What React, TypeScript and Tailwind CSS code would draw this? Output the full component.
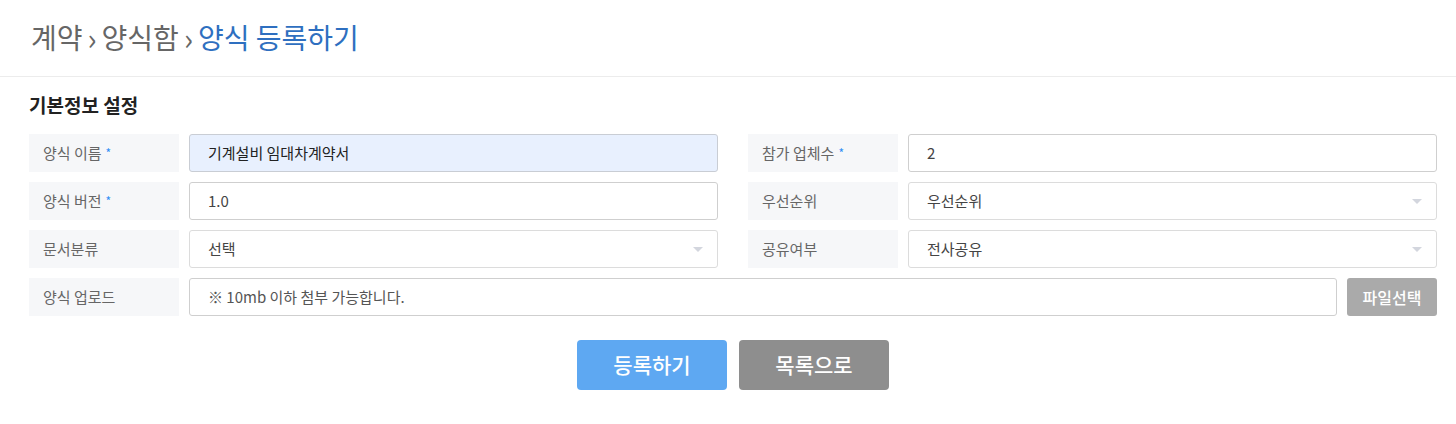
import React from "react";

const font = { fontFamily: '"Noto Sans CJK KR", "Noto Sans", sans-serif' };

function Label({ text, required }: { text: string; required?: boolean }) {
  return (
    <div className="w-[150px] h-[38px] shrink-0 bg-[#f6f7f9] flex items-center pl-[14px] text-[15px] text-[#666]">
      {text}
      {required && <span className="ml-[4px] text-[#2f8ef5] text-[12px] leading-none">*</span>}
    </div>
  );
}

function Field({ value, filled, select }: { value: string; filled?: boolean; select?: boolean }) {
  return (
    <div
      className={`flex-1 h-[38px] rounded-[3px] border flex items-center pl-[18px] pr-[14px] text-[15px] ${
        filled ? "bg-[#e8f0fe] border-[#c9cdd4] text-[#222]" : "bg-white"
      } ${select ? "border-[#dcdcdc] text-[#444]" : filled ? "" : "border-[#cfcfcf] text-[#444]"}`}
    >
      <span className="flex-1">{value}</span>
      {select && (
        <span className="w-0 h-0 border-l-[5px] border-r-[5px] border-t-[5px] border-l-transparent border-r-transparent border-t-[#d3d6de]" />
      )}
    </div>
  );
}

function Row({ label, required, value, filled, select }: { label: string; required?: boolean; value: string; filled?: boolean; select?: boolean }) {
  return (
    <div className="flex flex-1 gap-[10px]">
      <Label text={label} required={required} />
      <Field value={value} filled={filled} select={select} />
    </div>
  );
}

export default function App() {
  return (
    <div className="w-[1456px] h-[424px] bg-white" style={font}>
      <div className="h-[77px] border-b border-[#ececec] pl-[31px] flex items-center text-[28px] text-[#666] pb-[2px]">
        <span>계약</span>
        <span className="mx-[5px] text-[30px]">›</span>
        <span>양식함</span>
        <span className="mx-[5px] text-[30px]">›</span>
        <span className="text-[#2e6fc0]">양식 등록하기</span>
      </div>
      <div className="pl-[29px] pr-[19px] pt-[15px]">
        <h2 className="text-[19px] font-bold text-[#222] h-[26px] leading-[26px] mb-[16px]">기본정보 설정</h2>
        <div className="flex flex-col gap-[10px]">
          <div className="flex gap-[30px]">
            <Row label="양식 이름" required value="기계설비 임대차계약서" filled />
            <Row label="참가 업체수" required value="2" />
          </div>
          <div className="flex gap-[30px]">
            <Row label="양식 버전" required value="1.0" />
            <Row label="우선순위" value="우선순위" select />
          </div>
          <div className="flex gap-[30px]">
            <Row label="문서분류" value="선택" select />
            <Row label="공유여부" value="전사공유" select />
          </div>
          <div className="flex gap-[10px]">
            <Label text="양식 업로드" />
            <div className="flex-1 h-[38px] rounded-[3px] border border-[#cfcfcf] flex items-center pl-[18px] text-[15px] text-[#555]">
              ※ 10mb 이하 첨부 가능합니다.
            </div>
            <button className="w-[90px] h-[38px] rounded-[3px] bg-[#aaaaaa] text-white text-[16px] font-medium">
              파일선택
            </button>
          </div>
        </div>
        <div className="flex justify-center gap-[12px] mt-[24px]">
          <button className="w-[150px] h-[50px] rounded-[4px] bg-[#5ea8f2] text-white text-[21px] font-medium">등록하기</button>
          <button className="w-[150px] h-[50px] rounded-[4px] bg-[#8e8e8e] text-white text-[21px] font-medium">목록으로</button>
        </div>
      </div>
    </div>
  );
}
